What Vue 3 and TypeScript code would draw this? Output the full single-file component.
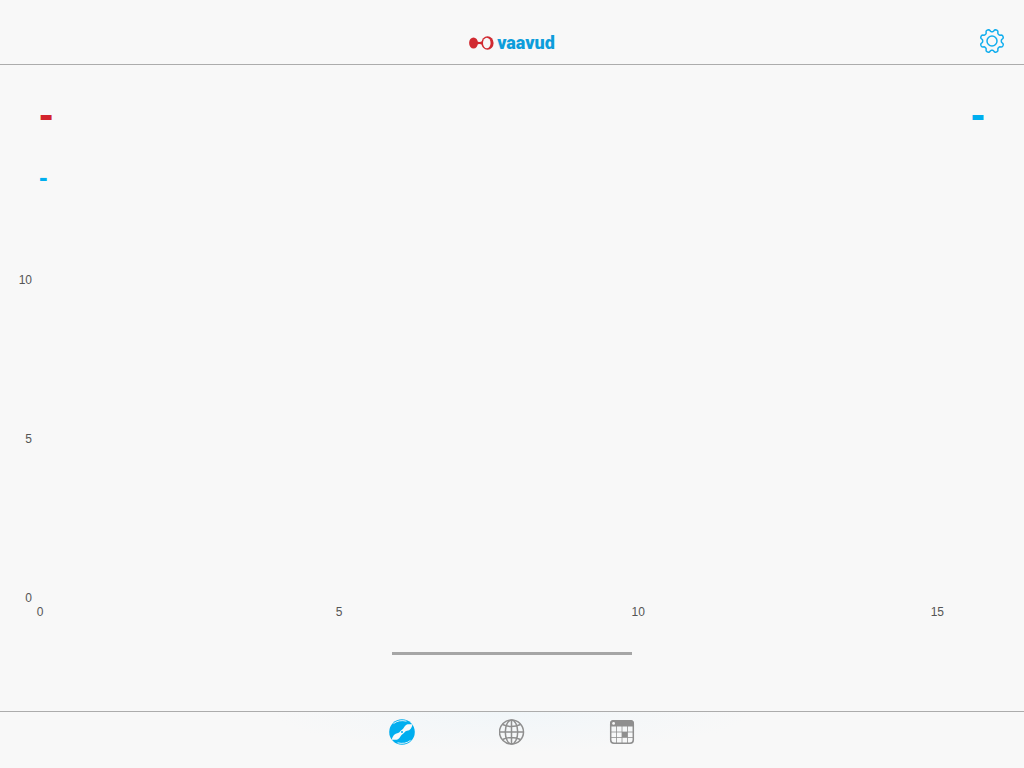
<script setup lang="ts">
import { ref } from 'vue'

type TabId = 'measure' | 'map' | 'history'

interface Tick {
  value: number
  position: string
}

const tabs: { id: TabId; label: string }[] = [
  { id: 'measure', label: 'Measure' },
  { id: 'map', label: 'Map' },
  { id: 'history', label: 'History' },
]
const activeTab = ref<TabId>('measure')

const maxSeconds = 15.78
const maxSpeed = 12.5
const xTicks: Tick[] = [0, 5, 10, 15].map((value) => ({
  value,
  position: `${(value / maxSeconds) * 100}%`,
}))
const yTicks: Tick[] = [0, 5, 10].map((value) => ({
  value,
  position: `${100 - (value / maxSpeed) * 100}%`,
}))

// Outline of the settings gear: eight soft teeth around the centre (13, 13).
const gearPoint = (degrees: number): string => {
  const angle = (degrees * Math.PI) / 180
  const radius = 10.6 - 1.3 * Math.tanh(2 * Math.cos(8 * angle))
  const x = 13 + radius * Math.sin(angle)
  const y = 13 - radius * Math.cos(angle)
  return `${x.toFixed(2)} ${y.toFixed(2)}`
}
const gearPath = `M${Array.from({ length: 120 }, (_, i) => gearPoint(i * 3)).join('L')}Z`
</script>

<template>
  <div class="app">
    <header class="header">
      <h1 class="brand">
        <svg class="brand-mark" width="25" height="14" viewBox="0 0 25 14" aria-hidden="true">
          <ellipse cx="4.5" cy="7" rx="4.4" ry="5.6" />
          <path d="M7 4.6Q10 7.4 13.5 5V9Q10 6.9 7 9.4Z" />
          <ellipse cx="18.5" cy="7" rx="6.1" ry="6.7" />
          <ellipse class="brand-hole" cx="17.8" cy="7" rx="3.8" ry="5.2" />
        </svg>
        <span>vaavud</span>
      </h1>
      <button class="settings" type="button" aria-label="Settings">
        <svg width="26" height="26" viewBox="0 0 26 26" aria-hidden="true">
          <path :d="gearPath" />
          <circle cx="13" cy="13" r="5" />
        </svg>
      </button>
    </header>

    <main class="main">
      <div class="readings">
        <output class="reading average" aria-label="Average">-</output>
        <output class="reading maximum" aria-label="Maximum">-</output>
      </div>
      <output class="reading current" aria-label="Current">-</output>

      <div class="plot">
        <svg class="axes" width="100%" height="100%" role="img" aria-label="Wind speed over time">
          <svg v-for="tick in yTicks" :key="`y${tick.value}`" class="tick" :y="tick.position">
            <text x="-8" y="4" text-anchor="end">{{ tick.value }}</text>
          </svg>
          <svg v-for="tick in xTicks" :key="`x${tick.value}`" class="tick" :x="tick.position" y="100%">
            <text x="0" y="18" text-anchor="middle">{{ tick.value }}</text>
          </svg>
        </svg>
      </div>

      <div class="progress" role="progressbar" aria-label="Measurement progress"></div>
    </main>

    <nav class="tabs">
      <button
        v-for="tab in tabs"
        :key="tab.id"
        type="button"
        class="tab"
        :class="{ active: activeTab === tab.id }"
        :aria-label="tab.label"
        @click="activeTab = tab.id"
      >
        <svg v-if="tab.id === 'measure'" width="26" height="26" viewBox="0 0 26 26" aria-hidden="true">
          <circle cx="13" cy="13" r="12.8" fill="currentColor" />
          <path fill="none" stroke="#f7f9fa" stroke-width=".9" d="M4.5 4.6Q10 .3 17.5 2.2M21.5 21.4Q16 25.7 8.5 23.8" />
          <path fill="#f7f9fa" d="M2.6 20.8C3.6 17 5.8 14.4 9 14C10.8 13.8 11.4 11.6 13 10.8C14.8 10 15 7.2 17.4 5.8C19.2 4.8 21.2 5.6 23.4 5.2C23 8.6 21.2 11.4 18 11.8C15.8 12.2 15.4 14.2 13.4 15.2C11.6 16 11.4 18.8 9 20.2C7 21.2 5 20.4 2.6 20.8Z" />
          <circle cx="13" cy="13" r="1" fill="currentColor" />
        </svg>
        <svg v-else-if="tab.id === 'map'" width="26" height="26" viewBox="0 0 26 26" fill="none" stroke="currentColor" stroke-width="1.5" aria-hidden="true">
          <circle cx="12.5" cy="13" r="12" />
          <ellipse cx="12.5" cy="13" rx="6.2" ry="12" />
          <path d="M12.5 1V25M.5 13H24.5M3.5 5.5Q12.5 9.5 21.5 5.5M3.5 20.5Q12.5 16.5 21.5 20.5" />
        </svg>
        <svg v-else width="26" height="26" viewBox="0 0 26 26" aria-hidden="true">
          <rect x="1.7" y="1.7" width="22.6" height="22.6" rx="3.2" fill="none" stroke="currentColor" stroke-width="1.5" />
          <path fill="currentColor" d="M1 7.5V4.5A3.5 3.5 0 0 1 4.5 1H21.5A3.5 3.5 0 0 1 25 4.5V7.5ZM13 13H18.5V18H13Z" />
          <path fill="none" stroke="currentColor" stroke-width=".8" d="M7.5 7V24.5M13 7V24.5M18.5 7V24.5M1.5 13H24.5M1.5 18.5H24.5" />
          <circle cx="4.6" cy="4.4" r="1.4" fill="#f7f7f7" />
        </svg>
      </button>
    </nav>
  </div>
</template>

<style>
body {
  margin: 0;
  background: #f8f8f8;
}
</style>

<style scoped>
.app {
  box-sizing: border-box;
  min-height: 100vh;
  display: flex;
  flex-direction: column;
  background: #f8f8f8;
  color: #555;
  font-family: "Liberation Sans", Arial, sans-serif;
}

button {
  margin: 0;
  padding: 0;
  border: 0;
  background: none;
  color: inherit;
  cursor: pointer;
}

svg {
  display: block;
}

.header {
  display: grid;
  grid-template-columns: 1fr auto 1fr;
  align-items: center;
  height: 46px;
  padding: 18px 19px 0;
  border-bottom: 1px solid #acacac;
}

.brand {
  grid-column: 2;
  display: flex;
  align-items: center;
  gap: 3px;
  margin: 0;
  padding-top: 4px;
  color: #0d9ddb;
  font-family: Roboto, "Liberation Sans", sans-serif;
  font-size: 18px;
  font-weight: 900;
  line-height: 20px;
}

.brand-mark {
  fill: #d12a31;
}

.brand-hole {
  fill: #f8f8f8;
}

.settings {
  justify-self: end;
}

.settings svg {
  fill: none;
  stroke: #12aeee;
  stroke-width: 1.5;
}

.main {
  flex: 1;
  display: flex;
  flex-direction: column;
  padding: 24px 39px 56px;
}

.readings {
  display: flex;
  justify-content: space-between;
  margin-bottom: 23px;
}

.reading {
  font-size: 43px;
  font-weight: bold;
  line-height: 50px;
}

.average {
  color: #d3242d;
}

.maximum,
.current {
  color: #00aeef;
}

.current {
  font-size: 26px;
  line-height: 30px;
}

.plot {
  flex: 1 1 200px;
  min-height: 200px;
  display: grid;
  margin: 8px 1px 54px;
}

.axes,
.tick {
  overflow: visible;
}

.axes {
  height: 100%;
  font-size: 12px;
  fill: #555;
}

.progress {
  align-self: center;
  width: 240px;
  height: 3px;
  background: #a6a6a6;
}

.tabs {
  display: flex;
  justify-content: center;
  height: 56px;
  border-top: 1px solid #acacac;
  background: radial-gradient(ellipse 240px 40px at 50% 0, #f1f6f9, #f8f8f8);
}

.tab {
  display: flex;
  justify-content: center;
  width: 110px;
  padding-top: 7px;
  color: #8f8f8f;
}

.tab.active {
  color: #00aeef;
}
</style>
